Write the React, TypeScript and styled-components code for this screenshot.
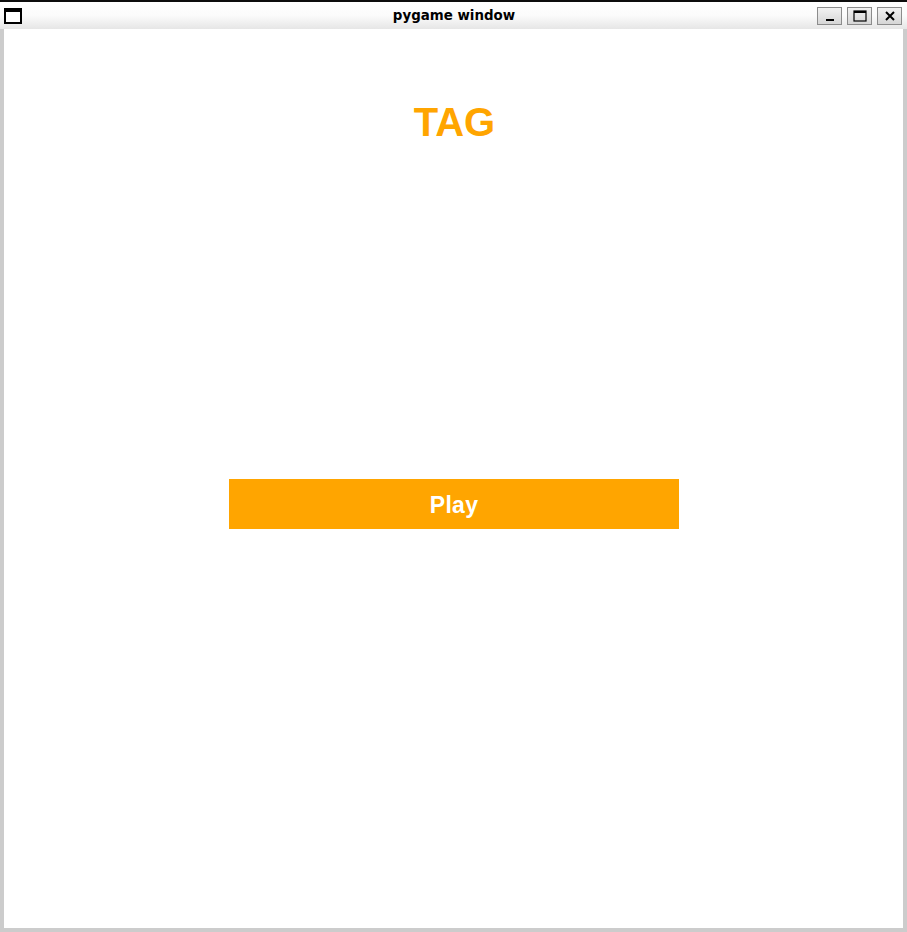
import React from "react";
import styled, { createGlobalStyle } from "styled-components";

const Global = createGlobalStyle`
  html, body { margin: 0; padding: 0; background: #ffffff; }
  body { width: 907px; height: 932px; overflow: hidden; }
  #root { width: 907px; height: 932px; }
`;

const Frame = styled.div`
  width: 907px;
  height: 932px;
  display: flex;
  flex-direction: column;
  box-sizing: border-box;
  border-top: 2px solid #0d0d0d;
  background: #cccccc;
`;

const TitleBar = styled.div`
  height: 27px;
  flex: none;
  display: grid;
  grid-template-columns: 1fr auto 1fr;
  align-items: center;
  background: linear-gradient(#ffffff 0%, #fbfbfb 50%, #e6e6e6 100%);
  padding: 0 4px 0 4px;
`;

const WindowIcon = styled.div`
  justify-self: start;
  width: 14px;
  height: 10px;
  border: 2px solid #000;
  border-top-width: 4px;
  background: #fff;
  margin-top: 1px;
`;

const Title = styled.div`
  font-family: "DejaVu Sans", sans-serif;
  font-weight: bold;
  font-size: 13.4px;
  color: #000;
  padding-left: 1px;
`;

const Controls = styled.div`
  justify-self: end;
  display: flex;
  gap: 5px;
  margin-top: 1px;
  margin-right: 1px;
`;

const CtlButton = styled.div`
  width: 25px;
  height: 18px;
  box-sizing: border-box;
  border: 1px solid #8c8c8c;
  background: linear-gradient(#f2f2f2, #d6d6d6);
  display: flex;
  align-items: center;
  justify-content: center;
`;

const Client = styled.div`
  flex: 1;
  margin: 0 4px 4px 4px;
  background: #ffffff;
  display: flex;
  flex-direction: column;
  align-items: center;
  padding-top: 73px;
`;

const Heading = styled.h1`
  margin: 0 0 0 2px;
  font-family: "Liberation Sans", Arial, sans-serif;
  font-weight: bold;
  font-size: 40px;
  line-height: 1;
  color: #ffa500;
`;

const PlayButton = styled.div`
  margin-top: 337px;
  width: 450px;
  height: 50px;
  box-sizing: border-box;
  padding-top: 2px;
  background: #ffa500;
  display: flex;
  align-items: center;
  justify-content: center;
  font-family: "Liberation Sans", Arial, sans-serif;
  font-weight: bold;
  font-size: 23px;
  letter-spacing: 0.3px;
  color: #ffffff;
  margin-left: 1px;
`;

export default function App() {
  return (
    <>
      <Global />
      <Frame>
        <TitleBar>
          <WindowIcon />
          <Title>pygame window</Title>
          <Controls>
            <CtlButton>
              <svg width="12" height="12" viewBox="0 0 12 12">
                <rect x="2" y="9" width="8" height="2" fill="#000" />
              </svg>
            </CtlButton>
            <CtlButton>
              <svg width="14" height="12" viewBox="0 0 14 12">
                <rect x="1" y="1" width="12" height="10" fill="none" stroke="#000" strokeWidth="1.2" />
                <rect x="1" y="1" width="12" height="2" fill="#000" />
              </svg>
            </CtlButton>
            <CtlButton>
              <svg width="12" height="12" viewBox="0 0 12 12">
                <path d="M2 2 L10 10 M10 2 L2 10" stroke="#000" strokeWidth="2" />
              </svg>
            </CtlButton>
          </Controls>
        </TitleBar>
        <Client>
          <Heading>TAG</Heading>
          <PlayButton>Play</PlayButton>
        </Client>
      </Frame>
    </>
  );
}
